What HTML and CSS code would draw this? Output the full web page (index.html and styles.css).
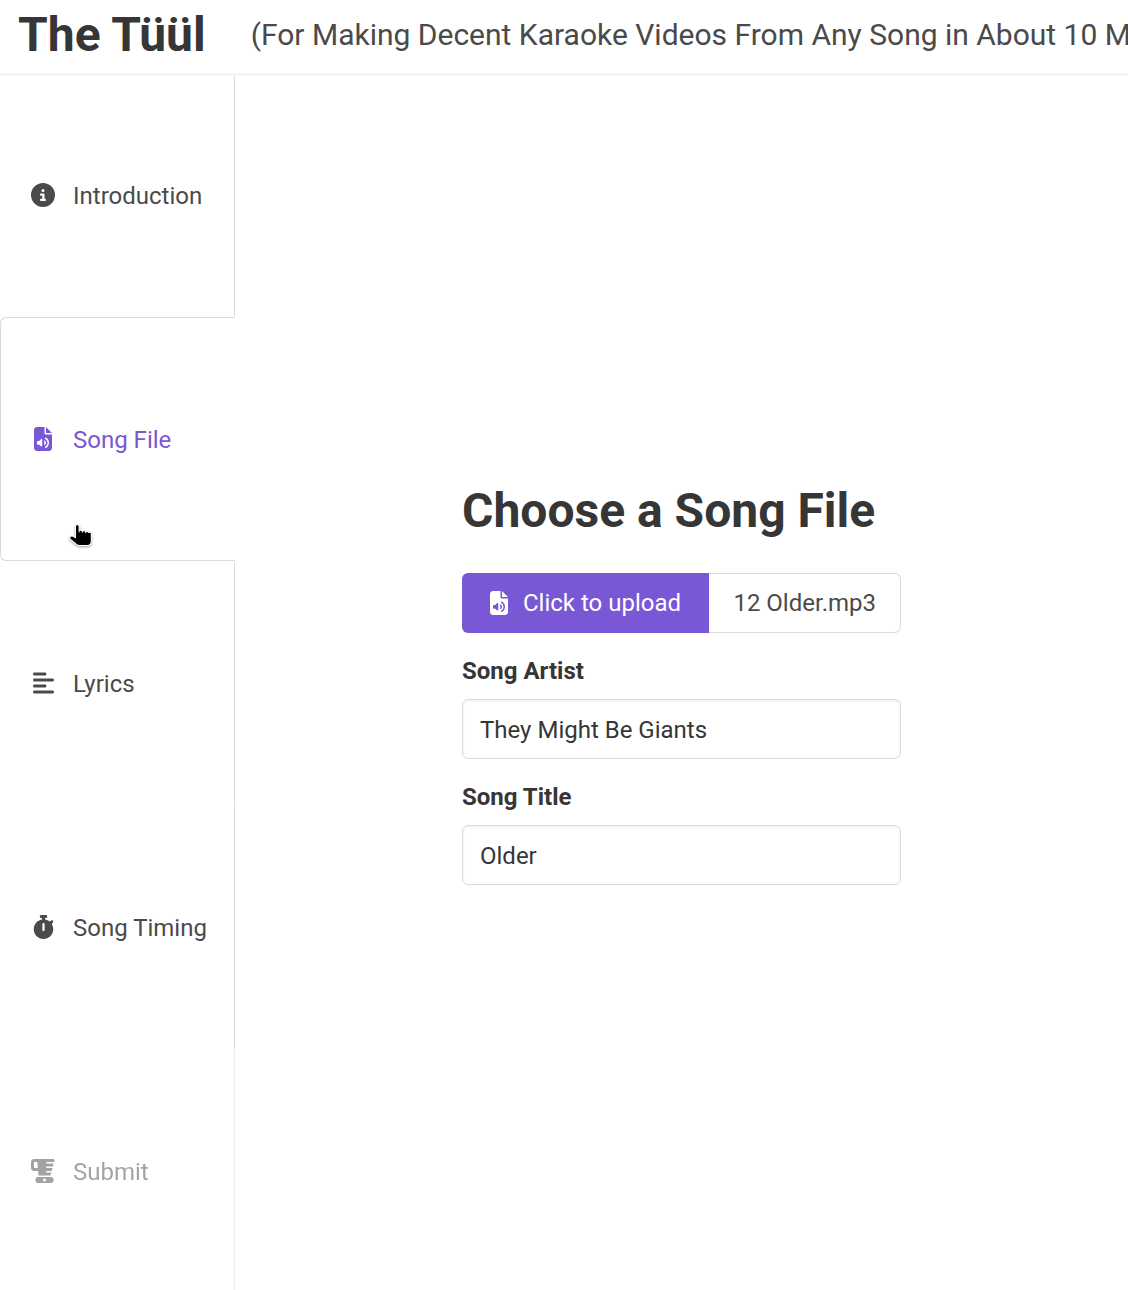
FILE: index.html
```html
<!DOCTYPE html>
<html lang="en">
<head>
  <meta charset="utf-8">
  <meta name="viewport" content="width=device-width, initial-scale=1">
  <title>The Tüül</title>
  <link rel="stylesheet" href="styles.css">
</head>
<body>
  <svg class="sprite" aria-hidden="true">
    <symbol id="file-audio" viewBox="0 0 384 512">
      <path d="M64 0C28.7 0 0 28.7 0 64V448c0 35.3 28.7 64 64 64H320c35.3 0 64-28.7 64-64V160H256c-17.7 0-32-14.3-32-32V0H64zM256 0V128H384L256 0zm2 226.3c37.1 22.4 62 63.1 62 109.7s-24.9 87.3-62 109.7c-7.6 4.6-17.4 2.1-22-5.4s-2.1-17.4 5.4-22C269.4 401.5 288 370.9 288 336s-18.6-65.5-46.5-82.3c-7.6-4.6-10-14.4-5.4-22s14.4-10 22-5.4zm-91.9 30.9c6 2.5 9.9 8.3 9.9 14.8V400c0 6.5-3.9 12.3-9.9 14.8s-12.9 1.1-17.4-3.5L113.400 376H80c-8.8 0-16-7.2-16-16V312c0-8.8 7.2-16 16-16h33.400l35.300-35.300c4.600-4.600 11.500-5.900 17.400-3.500zm51 34.900c6.600-5.900 16.700-5.300 22.600 1.300C249.800 304.600 256 319.600 256 336s-6.200 31.400-16.300 42.700c-5.900 6.600-16 7.100-22.600 1.300s-7.100-16-1.300-22.600c5.100-5.700 8.100-13.100 8.100-21.300s-3.100-15.700-8.100-21.300c-5.900-6.600-5.300-16.700 1.300-22.600z"/>
    </symbol>
  </svg>

  <header class="navbar">
    <h1 class="title">The Tüül</h1>
    <p class="subtitle">(For Making Decent Karaoke Videos From Any Song in About 10 Minutes)</p>
  </header>

  <div class="layout">
    <nav class="tabs" role="tablist" aria-orientation="vertical" aria-label="Steps">
      <button class="tab" type="button" role="tab" aria-selected="false">
        <span class="icon"><svg width="24" height="24" viewBox="0 0 512 512" aria-hidden="true"><path d="M256 512A256 256 0 1 0 256 0a256 256 0 1 0 0 512zM216 336h24V272H216c-13.3 0-24-10.7-24-24s10.7-24 24-24h48c13.3 0 24 10.7 24 24v88h8c13.3 0 24 10.7 24 24s-10.7 24-24 24H216c-13.3 0-24-10.7-24-24s10.7-24 24-24zm40-208a32 32 0 1 1 0 64 32 32 0 1 1 0-64z"/></svg></span>
        <span class="tab-name">Introduction</span>
      </button>
      <button class="tab is-active" type="button" role="tab" aria-selected="true" aria-controls="song-file">
        <span class="icon"><svg width="18" height="24" aria-hidden="true"><use href="#file-audio"/></svg></span>
        <span class="tab-name">Song File</span>
        <svg class="pointer" width="26" height="26" viewBox="0 0 26 26" aria-hidden="true"><path d="M8 4.500Q8 3 9.300 3t1.300 1.500V10.500h.8V9.800q0-1 1.200-1t1.300 1v1h.8v-.5q0-1 1.200-1t1.300 1v1h.8v-.3q0-1 1.200-1t1.200 1.200V11h.6q1.800-.6 1.800 1.200V19q0 4-3.600 4H11.500q-1.600 0-2.700-1L2.600 16.800q-1-1 0-1.900t2.200-.2L8 16.500z"/></svg>
      </button>
      <button class="tab" type="button" role="tab" aria-selected="false">
        <span class="icon"><svg width="21" height="24" viewBox="0 0 448 512" aria-hidden="true"><path d="M288 64c0 17.700-14.300 32-32 32H32C14.300 96 0 81.700 0 64S14.300 32 32 32H256c17.700 0 32 14.300 32 32zm0 256c0 17.700-14.300 32-32 32H32c-17.700 0-32-14.300-32-32s14.300-32 32-32H256c17.700 0 32 14.300 32 32zM0 192c0-17.700 14.300-32 32-32H416c17.700 0 32 14.300 32 32s-14.300 32-32 32H32c-17.700 0-32-14.300-32-32zM448 448c0 17.700-14.300 32-32 32H32c-17.700 0-32-14.300-32-32s14.300-32 32-32H416c17.700 0 32 14.300 32 32z"/></svg></span>
        <span class="tab-name">Lyrics</span>
      </button>
      <button class="tab" type="button" role="tab" aria-selected="false">
        <span class="icon"><svg width="21" height="24" viewBox="0 0 448 512" aria-hidden="true"><path d="M176 0c-17.700 0-32 14.300-32 32s14.300 32 32 32h16V98.400C92.300 113.800 16 200 16 304c0 114.900 93.100 208 208 208s208-93.100 208-208c0-41.800-12.300-80.700-33.500-113.200l24.100-24.100c12.500-12.500 12.500-32.800 0-45.300s-32.800-12.500-45.300 0L355.700 143c-28.100-23-62.200-38.800-99.700-44.600V64h16c17.700 0 32-14.300 32-32s-14.300-32-32-32H224 176zm72 192V320c0 13.300-10.700 24-24 24s-24-10.700-24-24V192c0-13.300 10.700-24 24-24s24 10.700 24 24z"/></svg></span>
        <span class="tab-name">Song Timing</span>
      </button>
      <button class="tab" type="button" role="tab" aria-selected="false" disabled>
        <span class="icon"><svg width="24" height="24" viewBox="0 0 512 512" aria-hidden="true"><path d="M0 64C0 28.700 28.700 0 64 0H470.100c21.100 0 36.400 20.100 30.900 40.400L494.500 64H336c-8.800 0-16 7.200-16 16s7.200 16 16 16H485.800l-17.500 64H336c-8.800 0-16 7.200-16 16s7.200 16 16 16H459.600l-17.500 64H336c-8.800 0-16 7.200-16 16s7.200 16 16 16h97.500L416 352H160l-8.700-96H64c-35.300 0-64-28.700-64-64V64zM145.500 192L133.800 64H64V192h81.500zM144 384H432c26.500 0 48 21.500 48 48v32c0 26.500-21.500 48-48 48H144c-26.500 0-48-21.500-48-48V432c0-26.500 21.500-48 48-48zm144 96a32 32 0 1 0 0-64 32 32 0 1 0 0 64z"/></svg></span>
        <span class="tab-name">Submit</span>
      </button>
    </nav>

    <main class="content" id="song-file" role="tabpanel">
      <form class="form">
        <h2 class="title">Choose a Song File</h2>
        <label class="upload">
          <input class="upload-input" type="file" accept="audio/*">
          <span class="upload-button">
            <span class="icon"><svg width="18" height="24" aria-hidden="true"><use href="#file-audio"/></svg></span>
            <span>Click to upload</span>
          </span>
          <span class="upload-name">12 Older.mp3</span>
        </label>
        <div class="field">
          <label class="label" for="artist">Song Artist</label>
          <input class="input" id="artist" type="text" value="They Might Be Giants">
        </div>
        <div class="field">
          <label class="label" for="song-title">Song Title</label>
          <input class="input" id="song-title" type="text" value="Older">
        </div>
      </form>
    </main>
  </div>
</body>
</html>
```
FILE: styles.css
```css
*,
*::before,
*::after {
  box-sizing: border-box;
}

body {
  margin: 0;
  height: 100vh;
  overflow: hidden;
  background: #fff;
  color: #4a4a4a;
  font-family: Roboto, "Liberation Sans", sans-serif;
  font-size: 24px;
  line-height: 36px;
}

button,
input {
  font: inherit;
  color: inherit;
}

svg {
  fill: currentColor;
}

.sprite {
  display: none;
}

.title {
  margin: 0;
  color: #363636;
  font-size: 48px;
  font-weight: 700;
  line-height: 54px;
}

/* Header */
.navbar {
  position: relative;
  z-index: 1;
  display: flex;
  align-items: center;
  gap: 45px;
  padding: 8px 0 11px 18px;
  white-space: nowrap;
  box-shadow: 0 3px 0 #f5f5f5;
}

.subtitle {
  flex: 1;
  min-width: 0;
  margin: 0;
  overflow: hidden;
  font-size: 30px;
  line-height: 36px;
}

/* Step tabs beside the current step */
.layout {
  display: flex;
}

.tabs {
  display: grid;
  flex: none;
  grid-auto-rows: 244px;
  min-width: 235px;
}

.tab {
  position: relative;
  display: flex;
  align-items: center;
  gap: 12px;
  padding: 0 24px;
  border: 1px solid transparent;
  border-right-color: #dbdbdb;
  background: none;
  white-space: nowrap;
  cursor: pointer;
}

.tab.is-active {
  border-color: #dbdbdb;
  border-right-color: transparent;
  border-radius: 6px 0 0 6px;
  color: #7957d5;
}

.tab:disabled {
  opacity: 0.5;
  cursor: not-allowed;
}

.tab-name {
  padding-top: 2px;
}

.icon {
  display: flex;
  align-items: center;
  justify-content: center;
  width: 36px;
  height: 36px;
}

.pointer {
  position: absolute;
  left: 67px;
  bottom: 12px;
  fill: #000;
  stroke: #fff;
  stroke-width: 2px;
  paint-order: stroke;
  filter: drop-shadow(0 1px 1px rgba(0, 0, 0, 0.4));
}

/* Song file form */
.content {
  display: flex;
  flex: 1;
  align-items: center;
  justify-content: center;
  padding-top: 3px;
}

.form {
  display: grid;
  gap: 18px;
  min-width: 439px;
}

.form .title {
  margin-bottom: 17px;
}

.upload {
  display: flex;
  height: 60px;
  white-space: nowrap;
  cursor: pointer;
}

.upload-input {
  position: absolute;
  width: 1px;
  height: 1px;
  opacity: 0;
}

.upload-button {
  display: flex;
  flex: 1;
  align-items: center;
  gap: 6px;
  padding-left: 19px;
  border-radius: 6px 0 0 6px;
  background: #7957d5;
  color: #fff;
}

.upload-name {
  padding: 11px 24px;
  border: 1px solid #dbdbdb;
  border-left: 0;
  border-radius: 0 6px 6px 0;
}

.field {
  display: grid;
  gap: 10px;
}

.label {
  padding-top: 2px;
  color: #363636;
  font-weight: 700;
}

.input {
  width: 100%;
  height: 60px;
  padding: 2px 17px 0;
  border: 1px solid #dbdbdb;
  border-radius: 6px;
  background: #fff;
  color: #363636;
  box-shadow: inset 0 1px 3px rgba(10, 10, 10, 0.08);
}
```
